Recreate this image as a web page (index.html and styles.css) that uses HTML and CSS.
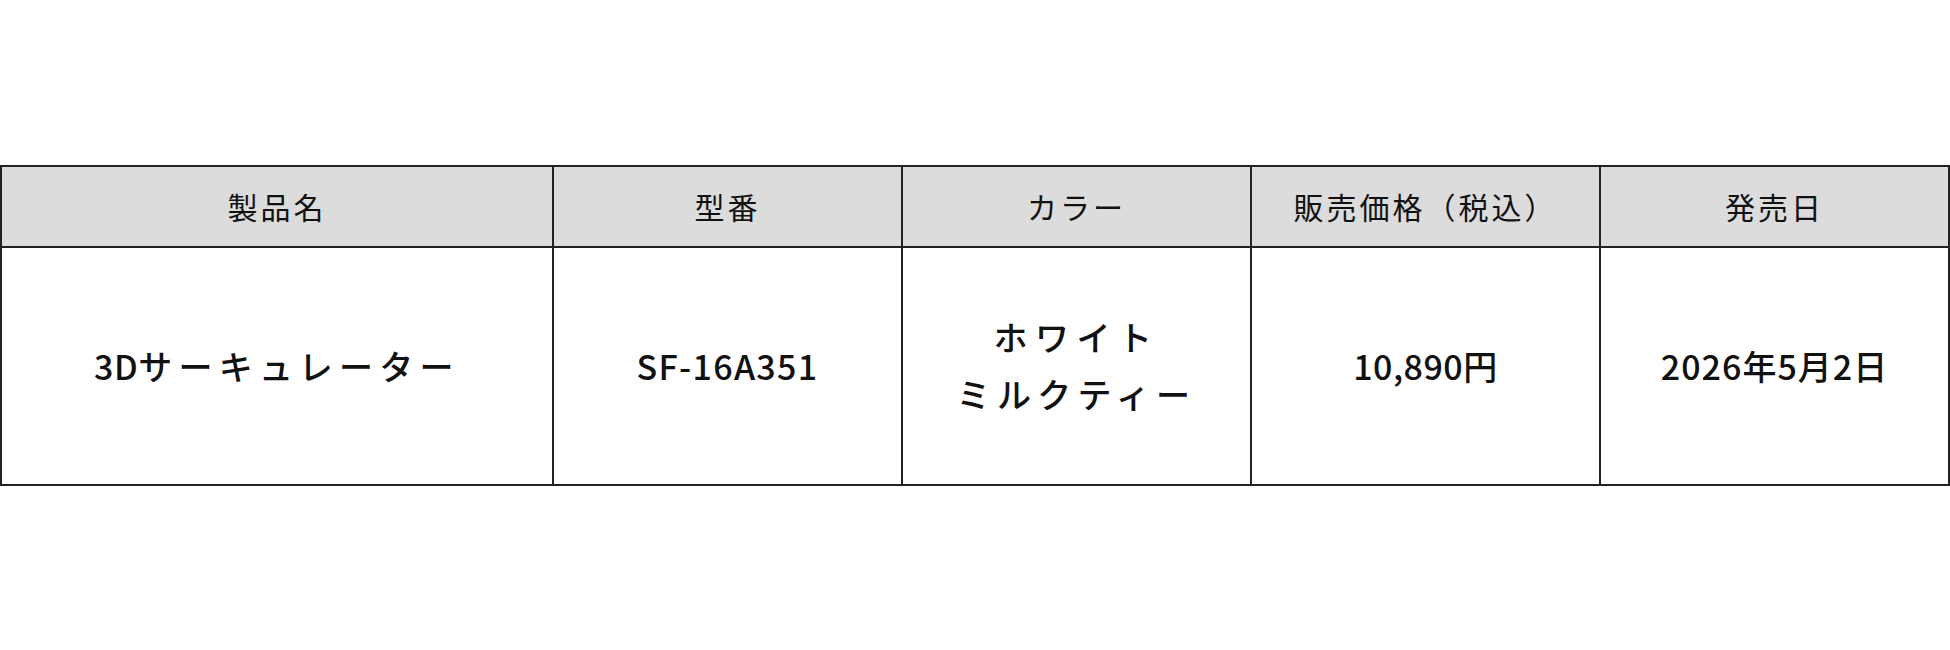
FILE: index.html
```html
<!DOCTYPE html>
<html lang="ja">
<head>
<meta charset="utf-8">
<title>製品情報</title>
<link rel="stylesheet" href="styles.css">
</head>
<body>
<main class="page">
  <table class="spec">
    <colgroup>
      <col class="c-name">
      <col class="c-col">
      <col class="c-col">
      <col class="c-col">
      <col class="c-col">
    </colgroup>
    <thead>
      <tr>
        <th>製品名</th>
        <th>型番</th>
        <th>カラー</th>
        <th>販売価格（税込）</th>
        <th>発売日</th>
      </tr>
    </thead>
    <tbody>
      <tr>
        <td class="kana"><span class="tight">3D</span>サーキュレーター</td>
        <td class="num code">SF-16A351</td>
        <td class="kana"><span class="line wide">ホワイト</span><span class="line">ミルクティー</span></td>
        <td class="num price">10,890円</td>
        <td class="num">2026年5月2日</td>
      </tr>
    </tbody>
  </table>
</main>
</body>
</html>
```

FILE: styles.css
```css
html, body {
  margin: 0;
  padding: 0;
  background: #ffffff;
}

.page {
  padding-top: 165px;
  font-family: "Noto Sans CJK JP", "Noto Sans", sans-serif;
  color: #111111;
}

.spec {
  width: 1949px;
  border-collapse: collapse;
  table-layout: fixed;
}

.c-name { width: 552px; }
.c-col { width: 349px; }

.spec th,
.spec td {
  border: 2px solid #222222;
  text-align: center;
  vertical-align: middle;
  padding: 0;
}

.spec th {
  height: 77px;
  padding-bottom: 2px;
  background: #dcdcdc;
  font-size: 30px;
  font-weight: 400;
  letter-spacing: 3px;
}

.spec td {
  height: 234px;
  padding-bottom: 2px;
  font-size: 34px;
  font-weight: 500;
  line-height: 57px;
}

.kana { letter-spacing: 6.3px; }
.tight { letter-spacing: 0.5px; }
.num { letter-spacing: 1px; }
.code { letter-spacing: 1.3px; }
.price { letter-spacing: 0.5px; }

.line {
  display: block;
}

.wide { letter-spacing: 7.5px; }
```
